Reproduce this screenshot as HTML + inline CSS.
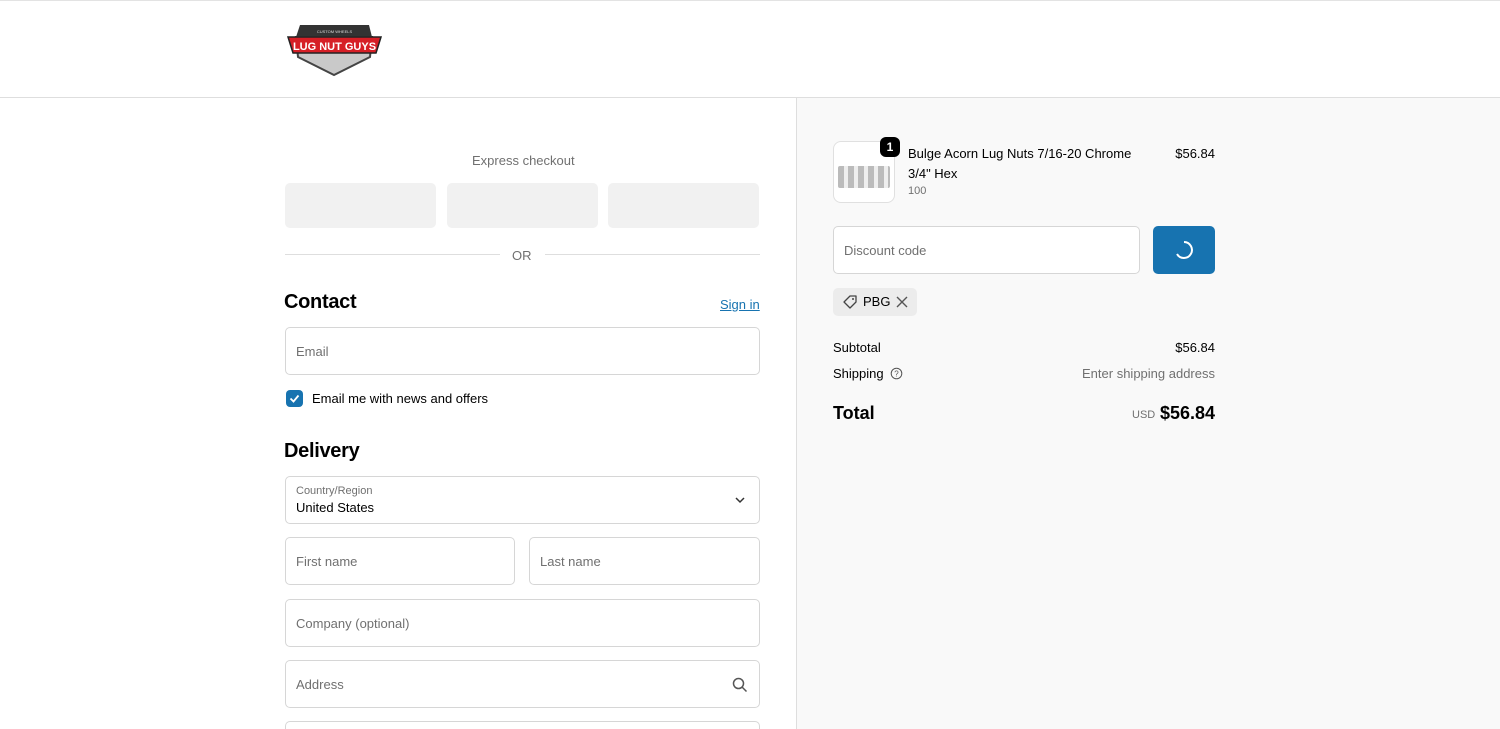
<!DOCTYPE html>
<html style="width:1500px;height:729px;overflow:hidden"><head><style>
*{box-sizing:border-box;margin:0;padding:0}
body{width:1500px;height:729px;overflow:hidden;font-family:"Liberation Sans",sans-serif;color:#000;background:#fff;position:relative}
.abs{position:absolute}
header{position:absolute;left:0;top:0;width:1500px;height:98px;border-top:1px solid #e3e3e3;border-bottom:1px solid #dedede;background:#fff}
.right{position:absolute;left:796px;top:98px;width:704px;height:631px;background:#f9f9f9;border-left:1px solid #dedede}
.inp{position:absolute;border:1px solid #d6d6d6;border-radius:5px;background:#fff;font-size:13px;color:#707070;padding-left:10px;display:flex;align-items:center}
.exp{position:absolute;top:183px;width:151px;height:45px;background:#f1f1f1;border-radius:5px}
h2{position:absolute;font-size:20px;font-weight:bold;letter-spacing:-0.3px}
.t13{position:absolute;font-size:13px}
.r{position:absolute;right:285px;font-size:13px;text-align:right}
</style></head><body>
<header>
<svg class="abs" style="left:286px;top:20px" width="97" height="56" viewBox="0 0 97 56">
<path d="M14 4 H83 L86 16 H10 Z" fill="#333"/>
<path d="M10 16 H86 L84 36 L48 54 L12 36 Z" fill="#c9c9c9" stroke="#444" stroke-width="2"/>
<path d="M2 16 H95 L90 32 H7 Z" fill="#d61f26" stroke="#222" stroke-width="1.5"/>
<text x="48.5" y="29" font-size="11" font-weight="bold" fill="#fff" text-anchor="middle" font-family="Liberation Sans">LUG NUT GUYS</text>
<text x="48.5" y="12" font-size="4" fill="#ddd" text-anchor="middle">CUSTOM WHEELS</text>
</svg>
</header>
<div class="right"></div>

<div class="t13" style="left:472px;top:153px;color:#707070">Express checkout</div>
<div class="exp" style="left:285px"></div><div class="exp" style="left:447px"></div><div class="exp" style="left:608px"></div>
<div class="abs" style="left:285px;top:254px;width:215px;height:1px;background:#dedede"></div>
<div class="abs" style="left:545px;top:254px;width:215px;height:1px;background:#dedede"></div>
<div class="t13" style="left:512px;top:248px;color:#707070">OR</div>

<h2 style="left:284px;top:291px">Contact</h2>
<div class="t13" style="left:720px;top:297px;color:#1773b0;text-decoration:underline">Sign in</div>
<div class="inp" style="left:285px;top:327px;width:475px;height:48px">Email</div>
<div class="abs" style="left:286px;top:390px;width:17px;height:17px;background:#1773b0;border-radius:4px"><svg width="17" height="17"><path d="M4.5 8.5 L7.5 11.5 L12.5 5.5" stroke="#fff" stroke-width="1.8" fill="none"/></svg></div>
<div class="t13" style="left:312px;top:391px">Email me with news and offers</div>

<h2 style="left:284px;top:440px">Delivery</h2>
<div class="inp" style="left:285px;top:476px;width:475px;height:48px;display:block;padding-top:8px">
<div style="font-size:11px;color:#707070">Country/Region</div><div style="font-size:13px;color:#000;margin-top:3px">United States</div></div>
<svg class="abs" style="left:734px;top:495px" width="12" height="10"><path d="M2 3 L6 7 L10 3" stroke="#333" stroke-width="1.5" fill="none"/></svg>
<div class="inp" style="left:285px;top:537px;width:230px;height:48px">First name</div>
<div class="inp" style="left:529px;top:537px;width:231px;height:48px">Last name</div>
<div class="inp" style="left:285px;top:599px;width:475px;height:48px">Company (optional)</div>
<div class="inp" style="left:285px;top:660px;width:475px;height:48px">Address</div>
<svg class="abs" style="left:732px;top:677px" width="16" height="16"><circle cx="6.5" cy="6.5" r="5" stroke="#555" stroke-width="1.5" fill="none"/><path d="M10 10 L14.5 14.5" stroke="#555" stroke-width="1.5"/></svg>
<div class="abs" style="left:285px;top:721px;width:475px;height:8px;border:1px solid #d6d6d6;border-bottom:none;border-radius:5px 5px 0 0"></div>

<div class="abs" style="left:833px;top:141px;width:62px;height:62px;background:#fff;border:1px solid #e0e0e0;border-radius:8px"></div>
<div class="abs" style="left:838px;top:166px;width:52px;height:22px;background:repeating-linear-gradient(90deg,#bbb 0 6px,#eee 6px 10px);border-radius:2px"></div>
<div class="abs" style="left:880px;top:137px;width:20px;height:20px;background:#000;color:#fff;border-radius:6px;font-size:12px;font-weight:bold;text-align:center;line-height:20px">1</div>
<div class="t13" style="left:908px;top:144px;line-height:20px;width:240px">Bulge Acorn Lug Nuts 7/16-20 Chrome<br>3/4" Hex</div>
<div class="abs" style="left:908px;top:185px;font-size:11px;color:#707070">100</div>
<div class="r" style="top:146px">$56.84</div>
<div class="inp" style="left:833px;top:226px;width:307px;height:48px">Discount code</div>
<div class="abs" style="left:1153px;top:226px;width:62px;height:48px;background:#1773b0;border-radius:5px"><svg width="62" height="48"><path d="M31 16 A8 8 0 1 1 24 28" stroke="#fff" stroke-width="2" fill="none"/></svg></div>
<div class="abs" style="left:833px;top:288px;width:84px;height:28px;background:#ececec;border-radius:5px"></div>
<svg class="abs" style="left:841px;top:293px" width="18" height="18"><path d="M3 9 L9 3 H15 V9 L9 15 Z" stroke="#444" stroke-width="1.3" fill="none" stroke-linejoin="round"/><circle cx="12" cy="6" r="1" fill="#444"/></svg>
<div class="t13" style="left:863px;top:294px">PBG</div>
<svg class="abs" style="left:896px;top:296px" width="12" height="12"><path d="M1 1 L11 11 M11 1 L1 11" stroke="#555" stroke-width="1.4"/></svg>
<div class="t13" style="left:833px;top:340px">Subtotal</div>
<div class="r" style="top:340px">$56.84</div>
<div class="t13" style="left:833px;top:366px">Shipping</div>
<svg class="abs" style="left:890px;top:367px" width="13" height="13"><circle cx="6.5" cy="6.5" r="5.3" stroke="#555" fill="none"/><text x="6.5" y="9.5" font-size="8" text-anchor="middle" fill="#555">?</text></svg>
<div class="r" style="top:366px;color:#707070">Enter shipping address</div>
<div class="abs" style="left:833px;top:403px;font-size:18px;font-weight:bold">Total</div>
<div class="abs" style="left:1132px;top:409px;font-size:11px;color:#707070">USD</div>
<div class="r" style="top:403px;font-size:18px;font-weight:bold">$56.84</div>
</body></html>
